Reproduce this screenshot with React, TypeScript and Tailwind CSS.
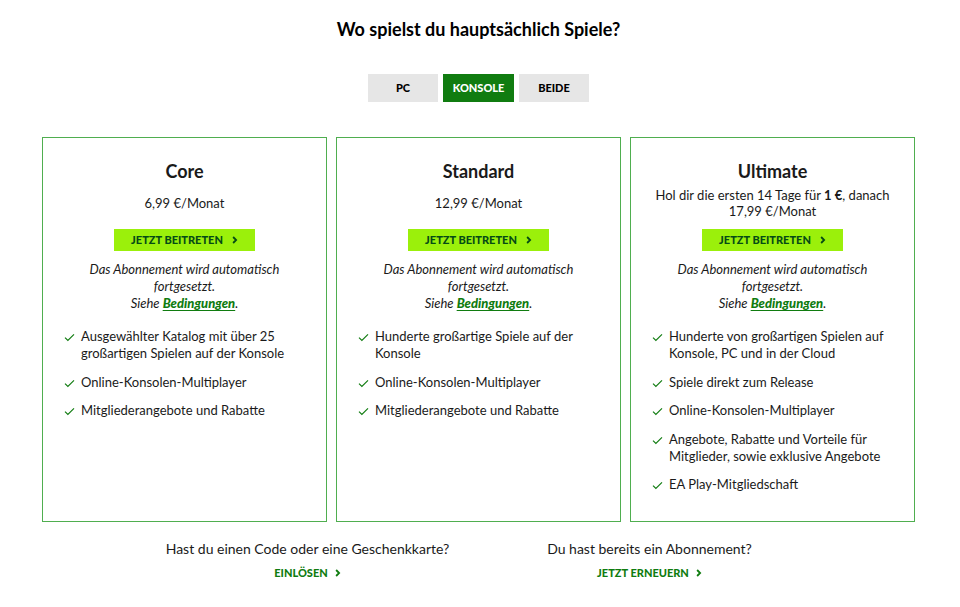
import React from "react";

const Chevron = ({ className = "" }: { className?: string }) => (
  <svg viewBox="0 0 8 10" className={className} width="6" height="8">
    <path d="M1.5 1 L5.5 5 L1.5 9" fill="none" stroke="currentColor" strokeWidth="2.4" />
  </svg>
);

const Check = () => (
  <svg viewBox="0 0 12 10" width="11" height="9" className="shrink-0 mt-[5px] text-[#107c10]">
    <path d="M1 5.2 L4.2 8.3 L11 1.5" fill="none" stroke="currentColor" strokeWidth="1.3" />
  </svg>
);

type Plan = {
  name: string;
  price: React.ReactNode;
  features: string[];
};

const plans: Plan[] = [
  {
    name: "Core",
    price: "6,99 €/Monat",
    features: [
      "Ausgewählter Katalog mit über 25 großartigen Spielen auf der Konsole",
      "Online-Konsolen-Multiplayer",
      "Mitgliederangebote und Rabatte",
    ],
  },
  {
    name: "Standard",
    price: "12,99 €/Monat",
    features: [
      "Hunderte großartige Spiele auf der Konsole",
      "Online-Konsolen-Multiplayer",
      "Mitgliederangebote und Rabatte",
    ],
  },
  {
    name: "Ultimate",
    price: (
      <>
        Hol dir die ersten 14 Tage für <b>1 €</b>, danach
        <br />
        17,99 €/Monat
      </>
    ),
    features: [
      "Hunderte von großartigen Spielen auf Konsole, PC und in der Cloud",
      "Spiele direkt zum Release",
      "Online-Konsolen-Multiplayer",
      "Angebote, Rabatte und Vorteile für Mitglieder, sowie exklusive Angebote",
      "EA Play-Mitgliedschaft",
    ],
  },
];

const PlanCard = ({ plan }: { plan: Plan }) => {
  return (
    <div className="w-[285px] h-[385px] border border-[#4fae4f] flex flex-col items-center pt-[21px] px-[21px]">
      <div className="text-[18px] leading-[24px] font-bold">{plan.name}</div>
      <div className="mt-[3px] h-[34px] flex items-center text-center text-[13px] leading-[16px]">
        <div>{plan.price}</div>
      </div>
      <button className="mt-[9px] w-[141px] h-[22px] bg-[#9bf00b] text-[#054b16] text-[11px] font-black flex items-center justify-center gap-[9px]">
        JETZT BEITRETEN
        <Chevron />
      </button>
      <div className="mt-[10px] text-center italic text-[13px] leading-[17px] px-[17px]">
        Das Abonnement wird automatisch fortgesetzt.
        <br />
        Siehe{" "}
        <a className="font-black text-[#107c10] underline underline-offset-2">Bedingungen</a>.
      </div>
      <ul className="mt-[16px] w-full flex flex-col gap-[11.5px]">
        {plan.features.map((f) => (
          <li key={f} className="flex gap-[6px] text-[13px] leading-[17px]">
            <Check />
            <span>{f}</span>
          </li>
        ))}
      </ul>
    </div>
  );
};

export default function App() {
  return (
    <div
      className="w-[960px] h-[607px] bg-white text-[#1a1a1a] flex flex-col items-center pt-[17px] pr-[3px]"
      style={{ fontFamily: '"Segoe UI", Lato, "Noto Sans", sans-serif' }}
    >
      <h1 className="text-[18px] leading-[24px] font-bold text-black">
        Wo spielst du hauptsächlich Spiele?
      </h1>
      <div className="mt-[33px] flex gap-[5px]">
        <button className="w-[70px] h-[28px] bg-[#e6e6e6] text-[11px] font-black text-black">PC</button>
        <button className="w-[71px] h-[28px] bg-[#107c10] text-[11px] font-black text-white">KONSOLE</button>
        <button className="w-[70px] h-[28px] bg-[#e6e6e6] text-[11px] font-black text-black">BEIDE</button>
      </div>
      <div className="mt-[35px] flex gap-[9px]">
        {plans.map((p) => (
          <PlanCard key={p.name} plan={p} />
        ))}
      </div>
      <div className="mt-[18px] w-[684px] flex">
        <div className="w-1/2 flex flex-col items-center">
          <div className="text-[14px] leading-[18px]">Hast du einen Code oder eine Geschenkkarte?</div>
          <a className="mt-[7px] text-[11px] font-black text-[#107c10] flex items-center gap-[7px]">
            EINLÖSEN
            <Chevron />
          </a>
        </div>
        <div className="w-1/2 flex flex-col items-center">
          <div className="text-[14px] leading-[18px]">Du hast bereits ein Abonnement?</div>
          <a className="mt-[7px] text-[11px] font-black text-[#107c10] flex items-center gap-[7px]">
            JETZT ERNEUERN
            <Chevron />
          </a>
        </div>
      </div>
    </div>
  );
}
